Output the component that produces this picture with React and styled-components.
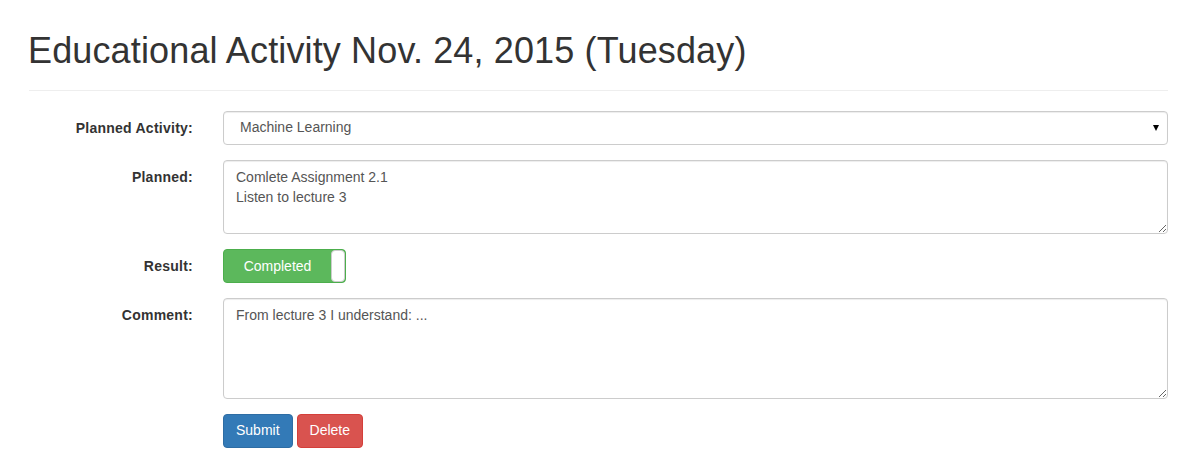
import React from 'react';
import styled, { createGlobalStyle } from 'styled-components';

const GlobalStyle = createGlobalStyle`
  html, body {
    margin: 0;
    padding: 0;
    background: #fff;
  }
  body {
    font-family: "Liberation Sans", Arial, Helvetica, sans-serif;
    font-size: 14px;
    line-height: 1.42857;
    color: #333;
  }
`;

const Page = styled.div`
  padding: 10px 12px 0 29px;
  width: 1139px;
`;

const Heading = styled.h1`
  font-size: 36px;
  font-weight: 500;
  line-height: 1.1;
  letter-spacing: 0.14px;
  margin: 21px 0 19px -1px;
  color: #333;
`;

const Rule = styled.hr`
  margin: 0 0 20px;
  border: 0;
  border-top: 1px solid #eee;
`;

const Form = styled.form`
  display: flex;
  flex-direction: column;
  gap: 15px;
`;

const Row = styled.div`
  display: grid;
  grid-template-columns: 164px 1fr;
  column-gap: 30px;
  align-items: start;
`;

const Label = styled.label`
  text-align: right;
  font-weight: bold;
  letter-spacing: 0.25px;
  padding-top: 8px;
`;

const SelectWrap = styled.div`
  position: relative;

  &::after {
    content: '';
    position: absolute;
    right: 9px;
    top: 14px;
    border-left: 3.5px solid transparent;
    border-right: 3.5px solid transparent;
    border-top: 6px solid #000;
    pointer-events: none;
  }
`;

const Select = styled.select`
  appearance: none;
  display: block;
  width: 100%;
  height: 34px;
  padding: 6px 12px 6px 16px;
  font: inherit;
  color: #555;
  background: #fff;
  border: 1px solid #ccc;
  border-radius: 4px;
  box-shadow: inset 0 1px 1px rgba(0, 0, 0, 0.075);
  box-sizing: border-box;
`;

const TextArea = styled.textarea`
  display: block;
  width: 100%;
  height: ${p => p.$height}px;
  padding: 6px 12px;
  font: inherit;
  line-height: 20px;
  color: #555;
  background: #fff;
  border: 1px solid #ccc;
  border-radius: 4px;
  box-shadow: inset 0 1px 1px rgba(0, 0, 0, 0.075);
  box-sizing: border-box;
  resize: vertical;
`;

const Toggle = styled.div`
  display: flex;
  width: 123px;
  height: 34px;
  box-sizing: border-box;
  background: #5cb85c;
  border: 1px solid #4cae4c;
  border-radius: 4px;
  overflow: hidden;
  color: #fff;
`;

const ToggleLabel = styled.span`
  flex: 1;
  text-align: center;
  line-height: 32px;
`;

const ToggleHandle = styled.span`
  width: 12px;
  background: #fff;
  border: 1px solid #ccc;
  border-radius: 4px;
`;

const Actions = styled.div`
  grid-column: 2;
  display: flex;
  gap: 4px;
`;

const Button = styled.button`
  height: 34px;
  padding: 6px 12px;
  font: inherit;
  color: #fff;
  background: ${p => (p.$danger ? '#d9534f' : '#337ab7')};
  border: 1px solid ${p => (p.$danger ? '#d43f3a' : '#2e6da4')};
  border-radius: 4px;
  cursor: pointer;
`;

export default function App() {
  return (
    <>
      <GlobalStyle />
      <Page>
        <Heading>Educational Activity Nov. 24, 2015 (Tuesday)</Heading>
        <Rule />
        <Form>
          <Row>
            <Label>Planned Activity:</Label>
            <SelectWrap>
              <Select defaultValue="ml">
                <option value="ml">Machine Learning</option>
              </Select>
            </SelectWrap>
          </Row>
          <Row>
            <Label>Planned:</Label>
            <TextArea
              $height={74}
              defaultValue={'Comlete Assignment 2.1\nListen to lecture 3'}
            />
          </Row>
          <Row>
            <Label>Result:</Label>
            <Toggle>
              <ToggleLabel>Completed</ToggleLabel>
              <ToggleHandle />
            </Toggle>
          </Row>
          <Row>
            <Label>Comment:</Label>
            <TextArea $height={101} defaultValue="From lecture 3 I understand: ..." />
          </Row>
          <Row>
            <Actions>
              <Button type="button">Submit</Button>
              <Button type="button" $danger>Delete</Button>
            </Actions>
          </Row>
        </Form>
      </Page>
    </>
  );
}
